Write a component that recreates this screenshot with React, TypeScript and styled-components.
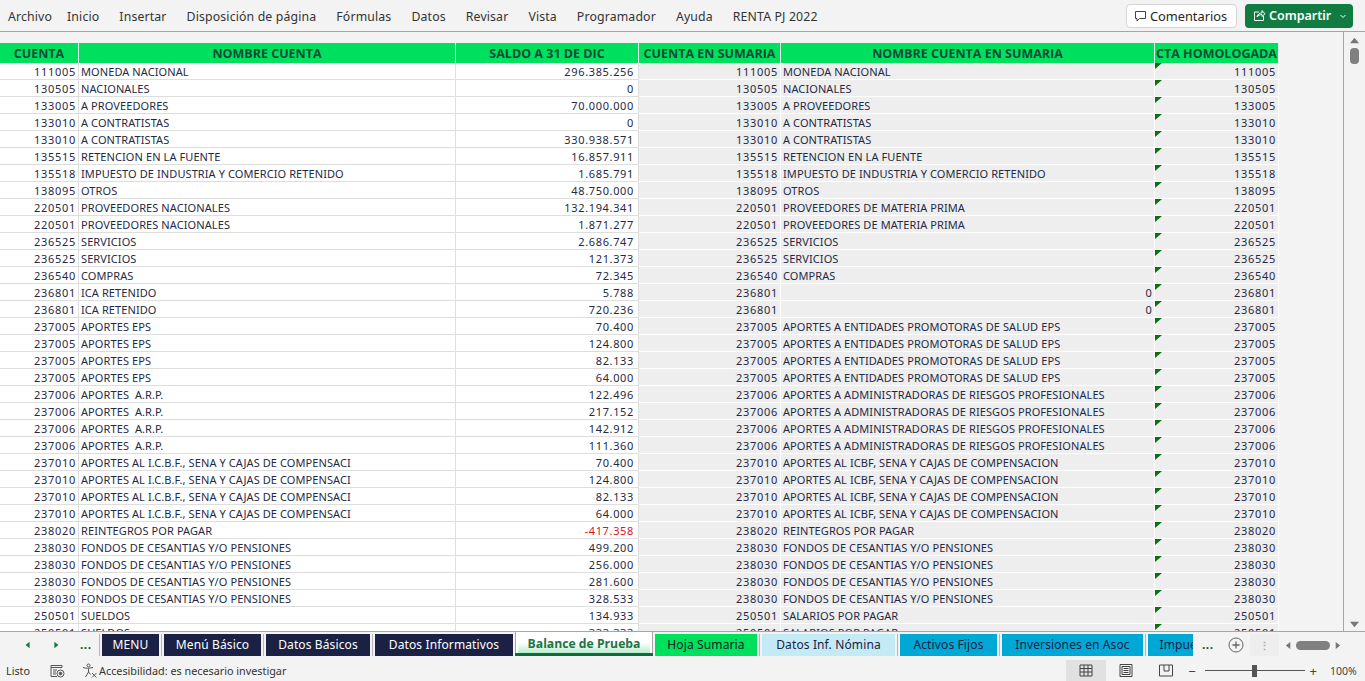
import React from "react";
import styled, { createGlobalStyle } from "styled-components";

const Global = createGlobalStyle`
  html, body { margin: 0; padding: 0; height: 100%; overflow: hidden; background: #f3f3f3; }
  #root { height: 100%; }
  * { box-sizing: border-box; }
`;

const Page = styled.div`
  width: 1365px; height: 681px; display: flex; flex-direction: column;
  font-family: "Noto Sans", "Open Sans", sans-serif; color: #262626; background: #f3f3f3; overflow: hidden;
`;
const MenuBar = styled.header`
  height: 32px; flex: none; display: flex; align-items: center; justify-content: space-between;
  padding: 0 12px 0 8px; background: #f3f3f3; border-bottom: 1px solid #a6a6a6;
`;
const Menu = styled.nav`
  display: flex; gap: 20px; padding-top: 1px; font-size: 12.3px; letter-spacing: 0.14px; color: #333;
  & > span:first-child { margin-right: -5px; }
`;
const Actions = styled.div`display: flex; gap: 8px; align-items: center;`;
const CommentButton = styled.button`
  width: 111px; height: 24px; display: flex; align-items: center; justify-content: center; gap: 3px;
  background: #fff; border: 1px solid #d4d4d4; border-radius: 4px; font: inherit; font-size: 12.8px; color: #262626; padding: 0 2px 0 0;
`;
const ShareButton = styled.button`
  width: 108px; height: 24px; display: flex; align-items: center; gap: 3px; padding: 0 0 0 8px;
  background: #107c41; color: #fff; border: 0; border-radius: 4px; font: inherit; font-size: 12.5px; font-weight: 600;
`;
const ShareCaret = styled.span`margin-left: auto; margin-right: 6px; display: flex;`;

const SheetArea = styled.main`flex: 1; min-height: 0; display: flex; overflow: hidden;`;
const GridViewport = styled.div`flex: 1; padding-top: 11px; overflow: hidden; border-right: 1px solid #a6a6a6;`;
const Sheet = styled.table`
  width: 1279px; table-layout: fixed; border-collapse: separate; border-spacing: 0;
  font-size: 11px; color: #1f2a44;
`;
const HeadCell = styled.th`
  height: 20px; padding: 0; background: #00e05f; color: #0e4d33; font-family: "Open Sans", sans-serif;
  font-size: 12.5px; font-weight: 700; text-align: center; border-right: 1px solid #e8f8ee; white-space: nowrap; overflow: hidden;
  line-height: 19px;
`;
const Cell = styled.td<{ $alt?: boolean; $right?: boolean; $neg?: boolean; $flag?: boolean; $track?: number; $inset?: number }>`
  position: relative; height: 17px; padding: 2px ${(p) => p.$inset ?? 2}px 0 2px; line-height: 14px; white-space: pre; overflow: hidden;
  letter-spacing: ${(p) => p.$track ?? 0.09}px;
  text-align: ${(p) => (p.$right ? "right" : "left")};
  background: ${(p) => (p.$alt ? "#eeeeee" : "#ffffff")};
  color: ${(p) => (p.$neg ? "#e0141e" : "#1f2a44")};
  border-right: 1px solid ${(p) => (p.$alt ? "#ffffff" : "#dedede")};
  border-bottom: 1px solid ${(p) => (p.$alt ? "#ffffff" : "#dedede")};
  ${(p) => p.$flag && `&::before { content: ""; position: absolute; left: 0; top: 0; border-style: solid; border-width: 6px 7px 0 0; border-color: #0b6e12 transparent transparent transparent; }`}
`;
const VScroll = styled.aside`
  width: 21px; flex: none; display: flex; flex-direction: column; align-items: center; background: #f3f3f3; padding-top: 4px;
`;
const VThumb = styled.div`width: 9px; height: 16px; margin-top: 3px; border-radius: 4px; background: #808080;`;
const VDown = styled.div`margin-top: auto; margin-bottom: 2px; display: flex;`;

const TabBar = styled.nav`
  height: 26px; flex: none; display: flex; align-items: flex-start; background: #f3f3f3; position: relative; border-top: 1px solid #a6a6a6;
`;
const TabNav = styled.div`
  width: 100px; height: 22px; margin: 2px 2px 0 0; flex: none; display: flex; align-items: center; padding-left: 24px; gap: 20px; color: #107c41;
  border-right: 1px solid #b5b5b5; font-weight: 700; font-size: 11px;
`;
const Dots = styled.span`color: #0e5c32; font-weight: 700; font-size: 12px; letter-spacing: 0.5px; line-height: 1;`;
const Tabs = styled.div`display: flex; flex: none; width: 1091px; overflow: hidden;`;
const Tab = styled.div<{ $w: number; $bg: string; $fg: string }>`
  width: ${(p) => p.$w}px; height: 22px; margin-top: 2px; flex: none; text-align: center; line-height: 21px; font-size: 12px; letter-spacing: .12px;
  background: ${(p) => p.$bg}; color: ${(p) => p.$fg}; white-space: nowrap; overflow: hidden;
`;
const TabGap = styled.span`
  width: 5px; height: 22px; margin-top: 2px; flex: none; display: flex; justify-content: center;
  &::after { content: ""; width: 1px; background: #b5b5b5; }
`;
const NarrowGap = styled.span`width: 2px; flex: none;`;
const ActiveTab = styled.div`
  width: 138px; height: 25px; margin-top: -1px; flex: none; padding: 0 2px 3px; text-align: center; background: #fff;
  border: 1px solid #a6a6a6; border-top: 0; border-bottom: 0; position: relative; z-index: 1;
`;
const ActiveInner = styled.div`
  height: 19px; line-height: 20px; margin-top: 3px; font-size: 12.2px; font-weight: 700; font-family: "Open Sans", sans-serif; color: #217346;
  background: linear-gradient(#ffffff 45%, #b8edcb);
`;
const ActiveLine = styled.div`position: absolute; left: -1px; right: -1px; bottom: 0; height: 3px; background: #0e6b3b;`;
const TabTools = styled.div`flex: 1; display: flex; align-items: center; height: 22px; margin-top: 2px; padding-left: 9px;`;
const AddCircle = styled.span`margin-left: 14px; display: flex;`;
const ToolGrip = styled.span`
  margin-left: 6px; width: 29px; height: 22px; background: #eeeeee; display: flex; align-items: center; justify-content: center; color: #aaa; font-size: 11px; font-weight: 700;
`;
const HScroll = styled.div`margin-left: 5px; display: flex; align-items: center; gap: 3px;`;
const HThumb = styled.div`width: 34px; height: 9px; border-radius: 5px; background: #808080;`;

const StatusBar = styled.footer`
  height: 24px; flex: none; display: flex; align-items: center; padding: 3px 0 0 6px; background: #f3f3f3; font-size: 10.8px; color: #333;
`;
const StatusMacro = styled.span`margin-left: 20px; display: flex;`;
const Accessibility = styled.span`margin-left: 17px; display: flex; align-items: center; gap: 1px;`;
const StatusRight = styled.div`margin-left: auto; display: flex; align-items: center; height: 100%;`;
const ViewButton = styled.span<{ $on?: boolean }>`
  width: 40px; height: 100%; display: flex; align-items: center; justify-content: center; background: ${(p) => (p.$on ? "#e1e1e1" : "transparent")};
`;
const Zoom = styled.div`margin-left: 2px; display: flex; align-items: center; font-size: 13px; color: #444;`;
const Track = styled.div`
  width: 100px; height: 1px; margin: 0 5px 0 9px; background: #555; position: relative;
`;
const Knob = styled.span`position: absolute; left: 47px; top: -5px; width: 5px; height: 12px; background: #555;`;
const Percent = styled.span`margin-left: 13px; width: 35px; font-size: 10.5px; color: #444;`;

type R = [string, string, string, string?];
const apE = "APORTES A ENTIDADES PROMOTORAS DE SALUD EPS";
const apR = "APORTES A ADMINISTRADORAS DE RIESGOS PROFESIONALES";
const apI = "APORTES AL ICBF, SENA Y CAJAS DE COMPENSACION";
const apL = "APORTES AL I.C.B.F., SENA Y CAJAS DE COMPENSACI";
const fon = "FONDOS DE CESANTIAS Y/O PENSIONES";
const rows: R[] = [
  ["111005", "MONEDA NACIONAL", "296.385.256"],
  ["130505", "NACIONALES", "0"],
  ["133005", "A PROVEEDORES", "70.000.000"],
  ["133010", "A CONTRATISTAS", "0"],
  ["133010", "A CONTRATISTAS", "330.938.571"],
  ["135515", "RETENCION EN LA FUENTE", "16.857.911"],
  ["135518", "IMPUESTO DE INDUSTRIA Y COMERCIO RETENIDO", "1.685.791"],
  ["138095", "OTROS", "48.750.000"],
  ["220501", "PROVEEDORES NACIONALES", "132.194.341", "PROVEEDORES DE MATERIA PRIMA"],
  ["220501", "PROVEEDORES NACIONALES", "1.871.277", "PROVEEDORES DE MATERIA PRIMA"],
  ["236525", "SERVICIOS", "2.686.747"],
  ["236525", "SERVICIOS", "121.373"],
  ["236540", "COMPRAS", "72.345"],
  ["236801", "ICA RETENIDO", "5.788", "0"],
  ["236801", "ICA RETENIDO", "720.236", "0"],
  ["237005", "APORTES EPS", "70.400", apE],
  ["237005", "APORTES EPS", "124.800", apE],
  ["237005", "APORTES EPS", "82.133", apE],
  ["237005", "APORTES EPS", "64.000", apE],
  ["237006", "APORTES  A.R.P.", "122.496", apR],
  ["237006", "APORTES  A.R.P.", "217.152", apR],
  ["237006", "APORTES  A.R.P.", "142.912", apR],
  ["237006", "APORTES  A.R.P.", "111.360", apR],
  ["237010", apL, "70.400", apI],
  ["237010", apL, "124.800", apI],
  ["237010", apL, "82.133", apI],
  ["237010", apL, "64.000", apI],
  ["238020", "REINTEGROS POR PAGAR", "-417.358"],
  ["238030", fon, "499.200"],
  ["238030", fon, "256.000"],
  ["238030", fon, "281.600"],
  ["238030", fon, "328.533"],
  ["250501", "SUELDOS", "134.933", "SALARIOS POR PAGAR"],
  ["250501", "SUELDOS", "333.333", "SALARIOS POR PAGAR"],
];
const widths = [79, 377, 183, 142, 374, 124];
const heads = ["CUENTA", "NOMBRE CUENTA", "SALDO A 31 DE DIC", "CUENTA EN SUMARIA", "NOMBRE CUENTA EN SUMARIA", "CTA HOMOLOGADA"];

const navy = "#1b2145";
const cyan = "#00a8d6";

const Tri = ({ d, c = "#107c41", s = 8 }: { d: "l" | "r" | "u" | "d"; c?: string; s?: number }) => {
  const p = { l: "7,1 7,9 2,5", r: "3,1 3,9 8,5", u: "5,2 10,8 0,8", d: "0,2 10,2 5,8" }[d];
  return <svg width={s} height={s} viewBox="0 0 10 10"><polygon points={p} fill={c} /></svg>;
};

export default function App() {
  return (
    <Page>
      <Global />
      <MenuBar>
        <Menu>
          {["Archivo", "Inicio", "Insertar", "Disposición de página", "Fórmulas", "Datos", "Revisar", "Vista", "Programador", "Ayuda", "RENTA PJ 2022"].map((m) => (
            <span key={m}>{m}</span>
          ))}
        </Menu>
        <Actions>
          <CommentButton>
            <svg width="13" height="13" viewBox="0 0 13 13" fill="none" stroke="#444"><path d="M1.5 2.5h10v7h-6l-2.5 2.5v-2.5h-1.5z" /></svg>
            Comentarios
          </CommentButton>
          <ShareButton>
            <svg width="13" height="13" viewBox="0 0 13 13" fill="none" stroke="#fff"><path d="M6 3H1.5v8.5h9V7M4 8c.5-3 3-4 5-4V1.5L12 4.8 9 7.5V5.500C7 5.500 5 6.500 4 8z" /></svg>
            Compartir
            <ShareCaret><svg width="8" height="8" viewBox="0 0 8 8" fill="none" stroke="#fff"><path d="M1.500 3l2.500 2.500L6.500 3" /></svg></ShareCaret>
          </ShareButton>
        </Actions>
      </MenuBar>

      <SheetArea>
        <GridViewport>
          <Sheet>
            <colgroup>
              {widths.map((w, i) => <col key={i} style={{ width: w }} />)}
            </colgroup>
            <thead>
              <tr>{heads.map((h) => <HeadCell key={h}>{h}</HeadCell>)}</tr>
            </thead>
            <tbody>
              {rows.map((r, i) => {
                const summary = r[3] ?? r[1];
                const zero = r[3] === "0";
                return (
                  <tr key={i}>
                    <Cell $right $track={0.7}>{r[0]}</Cell>
                    <Cell>{r[1]}</Cell>
                    <Cell $right $track={0.65} $inset={4} $neg={r[2].startsWith("-")}>{r[2]}</Cell>
                    <Cell $alt $right $track={0.7}>{r[0]}</Cell>
                    <Cell $alt $right={zero}>{summary}</Cell>
                    <Cell $alt $right $flag $track={0.7}>{r[0]}</Cell>
                  </tr>
                );
              })}
            </tbody>
          </Sheet>
        </GridViewport>
        <VScroll>
          <Tri d="u" c="#777" s={9} />
          <VThumb />
          <VDown><Tri d="d" c="#777" s={9} /></VDown>
        </VScroll>
      </SheetArea>

      <TabBar>
        <TabNav>
          <Tri d="l" />
          <Tri d="r" />
          <Dots>...</Dots>
        </TabNav>
        <Tabs>
          <Tab $w={57} $bg={navy} $fg="#fff">MENU</Tab>
          <TabGap />
          <Tab $w={97} $bg={navy} $fg="#fff">Menú Básico</Tab>
          <TabGap />
          <Tab $w={104} $bg={navy} $fg="#fff">Datos Básicos</Tab>
          <TabGap />
          <Tab $w={138} $bg={navy} $fg="#fff">Datos Informativos</Tab>
          <NarrowGap />
          <ActiveTab>
            <ActiveInner>Balance de Prueba</ActiveInner>
            <ActiveLine />
          </ActiveTab>
          <NarrowGap />
          <Tab $w={102} $bg="#00e05f" $fg="#10291c">Hoja Sumaria</Tab>
          <TabGap />
          <Tab $w={133} $bg="#c4ebf5" $fg={navy}>Datos Inf. Nómina</Tab>
          <TabGap />
          <Tab $w={97} $bg={cyan} $fg={navy}>Activos Fijos</Tab>
          <TabGap />
          <Tab $w={141} $bg={cyan} $fg={navy}>Inversiones en Asoc</Tab>
          <TabGap />
          <Tab $w={84} $bg={cyan} $fg={navy}>Impuestos</Tab>
        </Tabs>
        <TabTools>
          <Dots>...</Dots>
          <AddCircle>
            <svg width="16" height="16" viewBox="0 0 16 16" fill="none" stroke="#666"><circle cx="8" cy="8" r="7" /><path d="M8 4.500v7M4.500 8h7" strokeWidth="1.300" /></svg>
          </AddCircle>
          <ToolGrip>⋮</ToolGrip>
          <HScroll>
            <Tri d="l" c="#777" s={9} />
            <HThumb />
            <Tri d="r" c="#777" s={9} />
          </HScroll>
        </TabTools>
      </TabBar>

      <StatusBar>
        <span>Listo</span>
        <StatusMacro>
          <svg width="15" height="14" viewBox="0 0 15 14" fill="none" stroke="#555"><path d="M1 1.500h11v2H1zM1 3.500v9h6M3 6h4M3 8h3M3 10h3" /><circle cx="10.500" cy="9.500" r="3.500" /><circle cx="10.500" cy="9.500" r="1.300" fill="#555" /></svg>
        </StatusMacro>
        <Accessibility>
          <svg width="16" height="16" viewBox="0 0 16 16" fill="none" stroke="#555"><circle cx="6.500" cy="2.500" r="1.500" /><path d="M1 4.500c3 1 6 1 10 0M6.500 6v3L3.500 14M6.500 9l2 2.500M10 10l4.500 4.500M14.500 10L10 14.500" /></svg>
          Accesibilidad: es necesario investigar
        </Accessibility>
        <StatusRight>
          <ViewButton $on>
            <svg width="14" height="13" viewBox="0 0 14 13" fill="none" stroke="#444"><path d="M1 1h12v11H1zM1 4.500h12M1 8h12M5 1v11M9 1v11" /></svg>
          </ViewButton>
          <ViewButton>
            <svg width="14" height="13" viewBox="0 0 14 13" fill="none" stroke="#444"><path d="M1 .500h12v12H1zM3 2.500h8v8H3zM4.500 4.500h5M4.500 6.500h5M4.500 8.500h5" /></svg>
          </ViewButton>
          <ViewButton>
            <svg width="14" height="13" viewBox="0 0 14 13" fill="none" stroke="#444"><path d="M.500 1h13v11H.500zM5 1v6h5V1" /></svg>
          </ViewButton>
          <Zoom>
            <span>−</span>
            <Track><Knob /></Track>
            <span>+</span>
          </Zoom>
          <Percent>100%</Percent>
        </StatusRight>
      </StatusBar>
    </Page>
  );
}
